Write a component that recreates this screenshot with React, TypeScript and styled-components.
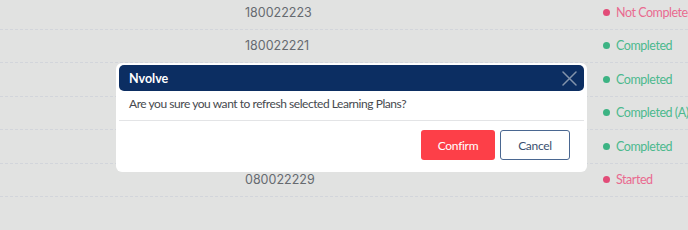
import React from "react";
import styled, { createGlobalStyle } from "styled-components";

const GlobalStyle = createGlobalStyle`
  html, body {
    margin: 0;
    padding: 0;
  }
  body {
    font-family: "Lato", "Liberation Sans", sans-serif;
    background: #e1e2e1;
  }
`;

const Page = styled.div`
  position: relative;
  width: 688px;
  height: 230px;
  overflow: hidden;
  background: #e1e2e1;
`;

const Table = styled.div`
  margin-top: -4px;
  display: flex;
  flex-direction: column;
`;

const Row = styled.div`
  display: grid;
  grid-template-columns: 245px 358px 1fr;
  align-items: center;
  height: 33.5px;
  box-sizing: border-box;
  border-bottom: 1px dashed #d2d5db;
`;

const Number = styled.div`
  grid-column: 2;
  font-family: "Inter", "Liberation Sans", sans-serif;
  font-size: 12.5px;
  color: #666a70;
`;

const Status = styled.div<{ $tone: "pink" | "green" }>`
  grid-column: 3;
  display: flex;
  align-items: center;
  gap: 6px;
  white-space: nowrap;
  font-size: 12.5px;
  letter-spacing: -0.45px;
  color: ${(p) => (p.$tone === "pink" ? "#e96a90" : "#4cb98e")};

  &::before {
    content: "";
    flex: none;
    width: 7px;
    height: 7px;
    border-radius: 50%;
    background: ${(p) => (p.$tone === "pink" ? "#e24c78" : "#3cb383")};
  }
`;

const Modal = styled.div`
  position: absolute;
  left: 116px;
  top: 63px;
  width: 471px;
  box-sizing: border-box;
  padding: 2px 3px 3px;
  background: #ffffff;
  border-radius: 6px;
  display: flex;
  flex-direction: column;
`;

const Header = styled.div`
  height: 26px;
  background: #0c2e62;
  border-radius: 5px;
  padding: 0 7px 0 10px;
  display: flex;
  align-items: center;
  justify-content: space-between;
`;

const Title = styled.div`
  color: #ffffff;
  font-weight: 700;
  font-size: 12.5px;
`;

const CloseButton = styled.button`
  border: none;
  background: none;
  padding: 0;
  width: 16px;
  height: 16px;
  display: flex;
  align-items: center;
  justify-content: center;
  cursor: pointer;
`;

const Body = styled.div`
  height: 30px;
  box-sizing: border-box;
  padding: 4px 10px 0;
  line-height: 18px;
  font-size: 12px;
  letter-spacing: -0.45px;
  color: #46494e;
  border-bottom: 1px solid #e3e4e6;
`;

const Footer = styled.div`
  display: flex;
  justify-content: flex-end;
  gap: 5px;
  padding: 9px 14px 9px;
`;

const Button = styled.button<{ $variant: "primary" | "outline" }>`
  height: 30px;
  box-sizing: border-box;
  border-radius: 3px;
  font-family: inherit;
  font-size: 12px;
  letter-spacing: -0.3px;
  cursor: pointer;
  width: ${(p) => (p.$variant === "primary" ? "74px" : "70px")};
  background: ${(p) => (p.$variant === "primary" ? "#fd3f48" : "#ffffff")};
  color: ${(p) => (p.$variant === "primary" ? "#ffffff" : "#3a4f70")};
  border: ${(p) =>
    p.$variant === "primary" ? "none" : "1.5px solid #4a6791"};
`;

const rows: { id: string; status: string; tone: "pink" | "green" }[] = [
  { id: "180022223", status: "Not Completed", tone: "pink" },
  { id: "180022221", status: "Completed", tone: "green" },
  { id: "180022224", status: "Completed", tone: "green" },
  { id: "180022225", status: "Completed (A)", tone: "green" },
  { id: "180022226", status: "Completed", tone: "green" },
  { id: "080022229", status: "Started", tone: "pink" },
];

export default function App() {
  return (
    <Page>
      <GlobalStyle />
      <Table>
        {rows.map((r) => (
          <Row key={r.id}>
            <Number>{r.id}</Number>
            <Status $tone={r.tone}>{r.status}</Status>
          </Row>
        ))}
      </Table>
      <Modal>
        <Header>
          <Title>Nvolve</Title>
          <CloseButton aria-label="Close">
            <svg width="15" height="15" viewBox="0 0 15 15">
              <path
                d="M1 1 L14 14 M14 1 L1 14"
                stroke="#8393ab"
                strokeWidth="1.5"
                strokeLinecap="round"
              />
            </svg>
          </CloseButton>
        </Header>
        <Body>Are you sure you want to refresh selected Learning Plans?</Body>
        <Footer>
          <Button $variant="primary">Confirm</Button>
          <Button $variant="outline">Cancel</Button>
        </Footer>
      </Modal>
    </Page>
  );
}
